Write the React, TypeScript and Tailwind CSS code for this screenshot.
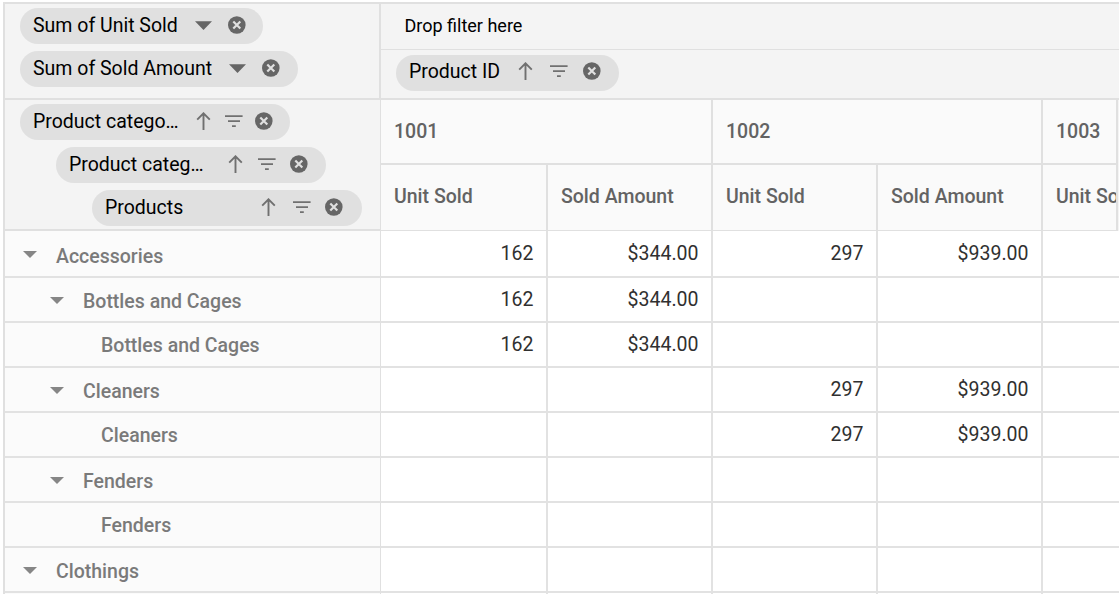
import React from "react";
import clsx from "clsx";

interface PillProps {
  label: string;
  labelClass: string;
  className?: string;
  isValue?: boolean;
}

const members = [
  { name: "Accessories", level: 0, cells: ["162", "$344.00", "297", "$939.00"] },
  { name: "Bottles and Cages", level: 1, cells: ["162", "$344.00", "", ""] },
  { name: "Bottles and Cages", level: 2, cells: ["162", "$344.00", "", ""] },
  { name: "Cleaners", level: 1, cells: ["", "", "297", "$939.00"] },
  { name: "Cleaners", level: 2, cells: ["", "", "297", "$939.00"] },
  { name: "Fenders", level: 1, cells: ["", "", "", ""] },
  { name: "Fenders", level: 2, cells: ["", "", "", ""] },
  { name: "Clothings", level: 0, cells: ["", "", "", ""] },
];

const indent = ["pl-[18px] pt-[2px]", "pl-[45px] pt-[2px]", "pl-[96px]"];

const columns = "grid grid-cols-[167px_165px_165px_165px_76px]";

const DropdownIcon = () => (
  <svg className="size-[18px] shrink-0" viewBox="0 0 18 18" fill="#666">
    <path d="M0 5.3h17L8.5 14z" />
  </svg>
);

const SortIcon = () => (
  <svg className="size-[18px] shrink-0" viewBox="0 0 18 18" fill="none" stroke="#707070" strokeWidth="1.9">
    <path d="M8.5 18V1.5M2.2 7.6L8.5 1.3l6.3 6.3" />
  </svg>
);

const FilterIcon = () => (
  <svg className="size-[18px] shrink-0" viewBox="0 0 18 18" fill="#707070">
    <path d="M0 3.2h17.6V5H0zM3 8.2h12V10H3zM7 13.2h3.8V15H7z" />
  </svg>
);

const RemoveIcon = () => (
  <svg className="size-[18px] shrink-0" viewBox="0 0 18 18">
    <circle cx="8.8" cy="9" r="8.8" fill="#666" />
    <path d="M5.3 5.5l7 7M12.3 5.5l-7 7" stroke="#e0e0e0" strokeWidth="2.2" />
  </svg>
);

const Pill: React.FC<PillProps> = ({ label, labelClass, className, isValue }) => {
  return (
    <div className={clsx("flex h-9 items-center rounded-full bg-[#e0e0e0] pl-[13px] text-black", className)}>
      <span className={clsx("shrink-0 whitespace-nowrap pt-px", labelClass)}>{label}</span>
      {isValue ? (
        <DropdownIcon />
      ) : (
        <>
          <SortIcon />
          <FilterIcon />
        </>
      )}
      <RemoveIcon />
    </div>
  );
};

const App: React.FC = () => {
  return (
    <div className="h-[594px] w-[1119px] overflow-hidden bg-white pl-[3px] pt-[2px] font-['Roboto',sans-serif] text-[19.5px] leading-6">
      <div className="w-[1200px] border-l-2 border-t-2 border-[#e0e0e0]">
        {/* field areas */}
        <div className="flex h-24 border-b-2 border-[#e0e0e0] bg-[#f4f4f4]">
          <div className="flex w-[376px] flex-col gap-[7px] border-r-2 border-[#e0e0e0] pl-[15px] pt-1">
            <Pill label="Sum of Unit Sold" labelClass="w-[147px]" className="w-[243px] gap-[15px] pb-[2px]" isValue />
            <Pill label="Sum of Sold Amount" labelClass="w-[181px]" className="w-[278px] gap-[15px] pb-[2px]" isValue />
          </div>
          <div className="flex-1">
            <div className="flex h-[46px] items-center border-b border-[#e0e0e0] pb-[2px] pl-[23.5px] text-[18px] text-black">
              Drop filter here
            </div>
            <div className="pl-[15px] pt-[5px]">
              <Pill label="Product ID" labelClass="w-[93px]" className="w-[223px] gap-[15px] pb-1" />
            </div>
          </div>
        </div>

        {/* row fields and column headers */}
        <div className="flex h-[131px] bg-[#f4f4f4]">
          <div className="flex w-[376px] flex-col gap-[7px] border-b-2 border-r border-[#e0e0e0] pl-[15px] pt-1">
            <Pill label="Product catego…" labelClass="w-[150px]" className="w-[270px] gap-3 pb-[2px]" />
            <Pill label="Product categ…" labelClass="w-[144px]" className="ml-9 w-[270px] gap-[13.6px] pb-[2px]" />
            <Pill label="Products" labelClass="w-[140px]" className="ml-[72px] w-[270px] gap-[14.8px] pb-[2px]" />
          </div>
          <div className="w-[737px] border-b border-[#e0e0e0] bg-[#fafafa] font-medium text-[#636363]">
            <div className="grid h-[65px] grid-cols-[332px_330px_75px] border-b-2 border-[#e0e0e0]">
              {["1001", "1002", "1003"].map((id) => (
                <div key={id} className="flex items-center border-r-2 border-[#e0e0e0] pl-[13px] pt-px">
                  {id}
                </div>
              ))}
            </div>
            <div className="grid h-[65px] grid-cols-[167px_165px_165px_165px_75px]">
              {["Unit Sold", "Sold Amount", "Unit Sold", "Sold Amount", "Unit Sold"].map((title, i) => (
                <div
                  key={i}
                  className="flex items-center overflow-hidden whitespace-nowrap border-r-2 border-[#e0e0e0] pb-px pl-[13px]"
                >
                  {title}
                </div>
              ))}
            </div>
          </div>
        </div>

        {/* table body */}
        {members.map((row, i) => (
          <div key={i} className={clsx("flex", i === 0 ? "h-[47px]" : "h-[45px]")}>
            <div
              className={clsx(
                "flex w-[376px] items-center gap-[17px] border-b-2 border-r border-b-[#e2e2e2] border-r-[#e0e0e0] bg-[#fbfbfb] font-medium text-[#7a7a7a]",
                indent[row.level]
              )}
            >
              {row.level < 2 && (
                <svg className="h-[7px] w-4 shrink-0" viewBox="0 0 16 7" fill="#868686">
                  <path d="M0 0h14L7 7z" />
                </svg>
              )}
              <span className={i === 0 ? "pt-1" : "pt-[2px]"}>{row.name}</span>
            </div>
            <div className={columns}>
              {row.cells.map((cell, j) => (
                <div
                  key={j}
                  className="flex items-center justify-end border-b-2 border-r-2 border-[#e2e2e2] pr-[12.5px] pt-px text-[#303030]"
                >
                  {cell}
                </div>
              ))}
              <div className="border-b-2 border-[#e2e2e2]" />
            </div>
            <div className="w-2 bg-[#f0f0f0]" />
          </div>
        ))}
        <div className="flex h-4">
          <div className="w-[376px] border-r border-[#e0e0e0] bg-[#fbfbfb]" />
          <div className={columns}>
            {[0, 1, 2, 3].map((n) => (
              <div key={n} className="border-r-2 border-[#e2e2e2]" />
            ))}
          </div>
          <div className="w-2 bg-[#f0f0f0]" />
        </div>
      </div>
    </div>
  );
};

export default App;
